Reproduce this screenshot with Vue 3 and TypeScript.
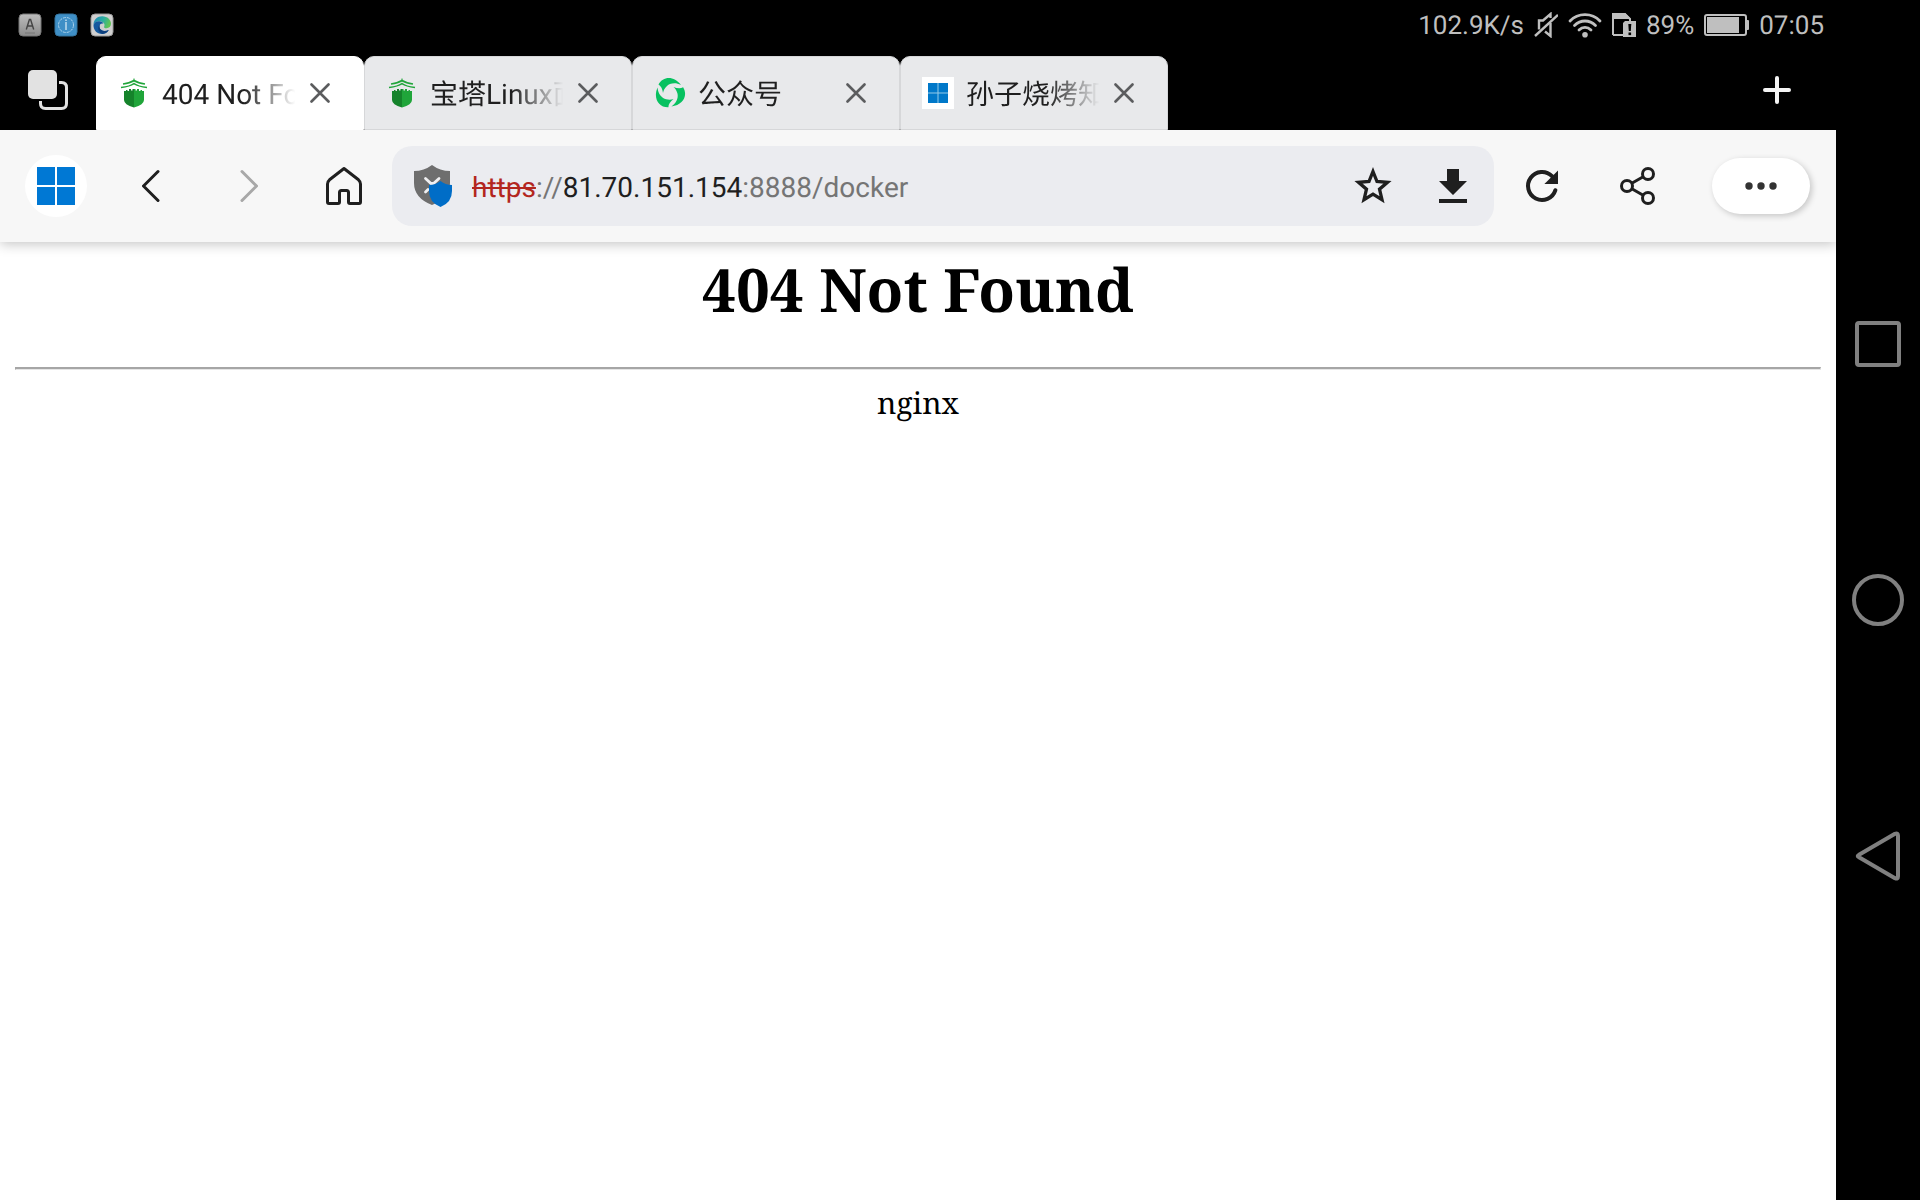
<script setup lang="ts">
import { ref } from 'vue'

type Favicon = 'pagoda' | 'swirl' | 'windows'

interface Tab {
  id: number
  title: string
  icon: Favicon
}

const tabs = ref<Tab[]>([
  { id: 1, title: '404 Not Found', icon: 'pagoda' },
  { id: 2, title: '宝塔Linux面板', icon: 'pagoda' },
  { id: 3, title: '公众号', icon: 'swirl' },
  { id: 4, title: '孙子烧烤知识', icon: 'windows' },
])
const activeId = ref(1)

const address = { scheme: 'https', separator: '://', host: '81.70.151.154', rest: ':8888/docker' }
const fullAddress = address.scheme + address.separator + address.host + address.rest
const editing = ref(false)

function closeTab(id: number): void {
  tabs.value = tabs.value.filter((tab) => tab.id !== id)
}
</script>

<template>
  <div class="device">
    <div class="screen">
      <header class="status">
        <div class="status-group apps">
          <svg width="24" height="24" viewBox="0 0 24 24" aria-hidden="true">
            <defs>
              <linearGradient id="keyGrad" x1="0" y1="0" x2="0" y2="1">
                <stop offset="0" stop-color="#bdbdbd" />
                <stop offset="1" stop-color="#8c8c8c" />
              </linearGradient>
            </defs>
            <rect x="1" y="1" width="22" height="22" rx="4" fill="url(#keyGrad)" stroke="#777" />
            <path d="M8.3 16.5 11.4 6.5h1.2l3.1 10M9.4 13h5.2" fill="none" stroke="#444" stroke-width="1.4" />
            <path d="M7 20h10" stroke="#777" />
          </svg>
          <svg width="24" height="24" viewBox="0 0 24 24" aria-hidden="true">
            <rect x="1" y="1" width="22" height="22" rx="4" fill="#3f8fc6" stroke="#35749f" />
            <circle cx="12" cy="12" r="7.5" fill="none" stroke="#a9d0ea" stroke-dasharray="3 1" />
            <path d="M12 9v8M12 6.5v1.5" stroke="#d5e9f5" stroke-width="1.3" />
          </svg>
          <svg width="24" height="24" viewBox="0 0 24 24" aria-hidden="true">
            <defs>
              <linearGradient id="edgeTop" x1="0" y1="0" x2="1" y2="0.3">
                <stop offset="0" stop-color="#1f86bd" />
                <stop offset="0.6" stop-color="#2cae9e" />
                <stop offset="1" stop-color="#5fc455" />
              </linearGradient>
            </defs>
            <rect x="1" y="1" width="22" height="22" rx="4" fill="#cfcfcf" stroke="#999" />
            <path d="M3.5 12C3.5 6.5 7.5 3.3 12.2 3.3 17.5 3.3 21 7 21 10.8 21 13.6 19 15.2 16.6 15.2 14.6 15.2 13.6 14.4 14.2 13.4 15.6 10.6 12.6 8.2 9.5 8.2 6 8.2 3.8 10 3.5 12Z" fill="url(#edgeTop)" />
            <path d="M3.5 12C4 9.5 6.5 8 9.3 8.2 11.5 8.3 13 9.4 13.5 10.5 10.5 10 9.2 12 9.5 14 10 17.5 14.5 19 18.8 17 17 20 14.5 21 12 21 7 21 3.3 17 3.5 12Z" fill="#14599f" />
            <path d="M9.5 14C9.5 18 14.5 19 18.8 17 17.5 19.3 15 20.7 12.5 20.9 8.5 19.5 7 15.5 9.5 11.5Z" fill="#0d3f7d" />
          </svg>
        </div>

        <div class="status-group system">
          <span>102.9K/s</span>
          <svg width="24" height="26" viewBox="0 0 24 26" fill="none" stroke="#bfbfbf" stroke-width="2.4" aria-hidden="true">
            <path d="M5 17.5V8.5H9L16.5 2V6M16.5 11V24L11 19.5" />
            <path d="M1 24 24 3" />
          </svg>
          <svg width="34" height="26" viewBox="0 0 34 26" fill="none" stroke="#bfbfbf" stroke-width="2.8" stroke-linecap="round" aria-hidden="true">
            <path d="M2 9C10 .5 24 .5 32 9M6.5 13.5C12.5 7.5 21.5 7.5 27.5 13.5M11 18C14.5 14.5 19.5 14.5 23 18" />
            <circle cx="17" cy="22.7" r="2.8" fill="#bfbfbf" stroke="none" />
          </svg>
          <svg width="24" height="24" viewBox="0 0 24 24" aria-hidden="true">
            <path d="M1 22V1H13L18 6V8" fill="none" stroke="#bfbfbf" stroke-width="2" />
            <path d="M0 0H13L19 6H0Z" fill="#bfbfbf" />
            <path d="M1 22H12" stroke="#bfbfbf" stroke-width="2" />
            <path d="M11 10 13 8H24V24H11Z" fill="#bfbfbf" />
            <path d="M16.3 11H19.3L18.8 18H16.8Z" fill="#000" />
            <rect x="16.5" y="19.5" width="2.6" height="2.6" fill="#000" />
          </svg>
          <span>89%</span>
          <svg width="45" height="22" viewBox="0 0 45 22" aria-hidden="true">
            <rect x="1" y="1" width="41" height="20" rx="2" fill="none" stroke="#bfbfbf" stroke-width="2" />
            <rect x="3" y="3" width="32" height="16" fill="#bfbfbf" />
            <path d="M42 6h2q1 0 1 1v8q0 1-1 1h-2z" fill="#bfbfbf" />
          </svg>
          <time>07:05</time>
        </div>
      </header>

      <nav class="strip" aria-label="Tabs">
        <button class="strip-button" type="button" aria-label="Tab overview">
          <svg width="40" height="40" viewBox="0 0 40 40" aria-hidden="true">
            <path d="M31 12.5H33.5Q38.5 12.5 38.5 17.5V33.5Q38.5 38.5 33.5 38.5H17.5Q12.5 38.5 12.5 33.5V31" fill="none" stroke="#e2e2e2" stroke-width="3" />
            <rect width="29" height="29" rx="5" fill="#e2e2e2" />
          </svg>
        </button>

        <div v-for="tab in tabs" :key="tab.id" class="tab" :class="{ active: tab.id === activeId }">
          <button class="tab-main" type="button" @click="activeId = tab.id">
            <svg v-if="tab.icon === 'pagoda'" width="32" height="32" viewBox="0 0 32 32" aria-hidden="true">
              <path d="M15.5 1.5h1V5h-1z" fill="#20a53a" />
              <path d="M5 7Q12 6 16 3.5 20 6 27 7M3 10.5Q12 9.5 16 6.5 20 9.5 29 10.5" fill="none" stroke="#20a53a" stroke-width="1.5" />
              <path d="M6 14H8V13H9.5V14H11V12H13V13.5H14.5V12H16V30.5Q6 27.5 6 23Z" fill="#15832b" />
              <path d="M26 14H24V13H22.5V14H21V12H19V13.5H17.5V12H16V30.5Q26 27.5 26 23Z" fill="#20a53a" />
            </svg>
            <svg v-else-if="tab.icon === 'swirl'" width="32" height="32" viewBox="0 0 32 32" fill="#07c160" aria-hidden="true">
              <g v-for="turn in 3" :key="turn" :transform="`rotate(${turn * 120} 16 16)`">
                <path d="M4.5 7.5C9-1 20-1.500 27 8 21 5 15.500 6.500 12.500 9.500 10.500 11.500 9.500 13.500 9 16 8.500 12 7 9 4.500 7.500Z" />
              </g>
            </svg>
            <svg v-else width="32" height="32" viewBox="0 0 32 32" aria-hidden="true">
              <path d="M0 0h32v32H0z" fill="#fff" />
              <path d="M6 6h20v20H6z" fill="#93cbe8" />
              <path d="M6 6h9.5v9.5H6zM16.5 6H26v9.5h-9.5zM6 16.5h9.5V26H6zM16.5 16.5H26V26h-9.5z" fill="#0078c9" />
            </svg>
            <span class="tab-title">{{ tab.title }}</span>
          </button>
          <button class="tab-close" type="button" :aria-label="`Close ${tab.title}`" @click="closeTab(tab.id)">
            <svg width="20" height="20" viewBox="0 0 20 20" aria-hidden="true">
              <path d="M1.5 1.5l17 17M18.5 1.5l-17 17" stroke="#5b5c5e" stroke-width="2.6" stroke-linecap="round" />
            </svg>
          </button>
        </div>

        <button class="strip-button new-tab" type="button" aria-label="New tab">
          <svg width="28" height="28" viewBox="0 0 28 28" aria-hidden="true">
            <path d="M14 2v24M2 14h24" stroke="#f4f4f4" stroke-width="4" stroke-linecap="round" />
          </svg>
        </button>
      </nav>

      <div class="toolbar">
        <button class="profile" type="button" aria-label="Profile">
          <svg width="38" height="38" viewBox="0 0 38 38" fill="#0078d4" aria-hidden="true">
            <path d="M0 0h18v18H0zM20 0h18v18H20zM0 20h18v18H0zM20 20h18v18H20z" />
          </svg>
        </button>
        <button class="tool" type="button" aria-label="Back">
          <svg width="20" height="34" viewBox="0 0 20 34" aria-hidden="true">
            <path d="M16 2.5 1.5 17 16 31.5" fill="none" stroke="#1f1f1f" stroke-width="3" stroke-linecap="round" stroke-linejoin="round" />
          </svg>
        </button>
        <button class="tool" type="button" aria-label="Forward" disabled>
          <svg width="20" height="34" viewBox="0 0 20 34" aria-hidden="true">
            <path d="M4 2.5 18.5 17 4 31.5" fill="none" stroke="#a8a8a8" stroke-width="3" stroke-linecap="round" stroke-linejoin="round" />
          </svg>
        </button>
        <button class="tool" type="button" aria-label="Home">
          <svg width="36" height="40" viewBox="0 0 36 40" aria-hidden="true">
            <path d="M18 2.5 3.5 13.8Q1.5 15.5 1.5 18V36Q1.5 37.5 3 37.5H12Q13.5 37.5 13.5 36V26.5Q13.5 24.5 15.5 24.5H20.5Q22.5 24.5 22.5 26.5V36Q22.5 37.5 24 37.5H33Q34.5 37.5 34.5 36V18Q34.5 15.5 32.5 13.8Z" fill="none" stroke="#1f1f1f" stroke-width="3" stroke-linejoin="round" />
          </svg>
        </button>

        <div class="address">
          <svg class="shield" width="38" height="42" viewBox="0 0 38 42" aria-hidden="true">
            <path d="M18 0Q26 6 36 6V18Q36 33 18 40 0 33 0 18V6Q10 6 18 0Z" fill="#6e6e6e" />
            <path d="M11.5 13.5 17 18.5H19.5L25 13.5M11.5 27 14 24.5" fill="none" stroke="#f0f0f2" stroke-width="2.8" stroke-linecap="round" />
            <path d="M26.5 16Q31.5 20 38 20V26Q38 37.5 26.5 42 15 37.5 15 26V20Q21.5 20 26.5 16Z" fill="#006dc7" />
          </svg>
          <div class="address-field">
            <div v-show="!editing" class="address-text">
              <span class="scheme">{{ address.scheme }}</span><span>{{ address.separator }}</span><span class="host">{{ address.host }}</span><span>{{ address.rest }}</span>
            </div>
            <input
              class="address-input"
              type="text"
              aria-label="Address"
              :value="editing ? fullAddress : ''"
              @focus="editing = true"
              @blur="editing = false"
            />
          </div>
          <button class="address-action" type="button" aria-label="Add to favourites">
            <svg width="40" height="40" viewBox="0 0 40 40" aria-hidden="true">
              <path d="M20 5.5 24 15.5 34.5 16.3 26.5 23.2 29 33.7 20 28.2 11 33.7 13.5 23.2 5.5 16.3 16 15.5Z" fill="none" stroke="#1f1f1f" stroke-width="3.3" />
            </svg>
          </button>
          <button class="address-action" type="button" aria-label="Download">
            <svg width="28" height="34" viewBox="0 0 28 34" fill="#1f1f1f" aria-hidden="true">
              <path d="M8 0h12v12h8L14 26 0 12h8zM0 30h28v4H0z" />
            </svg>
          </button>
        </div>

        <button class="tool" type="button" aria-label="Reload">
          <svg width="48" height="48" viewBox="0 0 24 24" aria-hidden="true">
            <path d="M17 7.1A7 7 0 1 0 18.7 14.1" fill="none" stroke="#1f1f1f" stroke-width="2" stroke-linecap="round" />
            <path d="M20 4.2V11H13.2Z" fill="#1f1f1f" />
          </svg>
        </button>
        <button class="tool" type="button" aria-label="Share">
          <svg width="36" height="38" viewBox="0 0 36 38" fill="none" stroke="#1f1f1f" stroke-width="3" aria-hidden="true">
            <circle cx="28" cy="7" r="5.5" />
            <circle cx="7" cy="19" r="5.5" />
            <circle cx="28" cy="31" r="5.5" />
            <path d="M11.8 16.3 23.2 9.7M11.8 21.7 23.2 28.3" />
          </svg>
        </button>
        <button class="menu" type="button" aria-label="More">
          <svg width="32" height="8" viewBox="0 0 32 8" fill="#333" aria-hidden="true">
            <circle cx="4" cy="4" r="3.7" />
            <circle cx="16" cy="4" r="3.7" />
            <circle cx="28" cy="4" r="3.7" />
          </svg>
        </button>
      </div>

      <main class="page">
        <h1>404 Not Found</h1>
        <hr />
        <p>nginx</p>
      </main>
    </div>

    <nav class="rail" aria-label="System">
      <button class="rail-button" type="button" aria-label="Recent apps">
        <svg width="52" height="52" viewBox="0 0 52 52" fill="none" stroke="#808080" stroke-width="4" aria-hidden="true">
          <rect x="5" y="5" width="42" height="42" rx="2" />
        </svg>
      </button>
      <button class="rail-button" type="button" aria-label="Home screen">
        <svg width="52" height="52" viewBox="0 0 52 52" fill="none" stroke="#808080" stroke-width="4" aria-hidden="true">
          <circle cx="26" cy="26" r="24" />
        </svg>
      </button>
      <button class="rail-button" type="button" aria-label="Go back">
        <svg width="52" height="52" viewBox="0 0 52 52" fill="none" stroke="#808080" stroke-width="4" stroke-linejoin="round" aria-hidden="true">
          <path d="M7 24.7 43 3.800Q46 2.500 46 5.800V46.200Q46 49.500 43 48.200L7 27.300Q4.500 26 7 24.700Z" />
        </svg>
      </button>
    </nav>
  </div>
</template>

<style>
body {
  background: #000;
}
</style>

<style scoped>
.device {
  display: flex;
  min-height: 100vh;
  background: #000;
  font-family: Roboto, "Noto Sans CJK SC", sans-serif;
  text-rendering: geometricPrecision;
}

button {
  display: flex;
  align-items: center;
  justify-content: center;
  flex: none;
  padding: 0;
  border: 0;
  background: none;
  color: inherit;
  font: inherit;
  text-rendering: inherit;
}

svg {
  display: block;
  flex: none;
}

.screen {
  display: flex;
  flex: 1;
  flex-direction: column;
  min-width: 0;
}

.status {
  display: flex;
  align-items: center;
  justify-content: space-between;
  height: 50px;
  padding: 0 12px 0 18px;
  color: #bfbfbf;
  font-size: 26px;
  line-height: 32px;
}

.status-group {
  display: flex;
  align-items: center;
  gap: 10px;
}

.apps {
  gap: 12px;
}

.system span,
.system time {
  padding-top: 2px;
}

.strip {
  display: flex;
  align-items: flex-end;
  height: 80px;
}

.strip-button {
  width: 96px;
  height: 80px;
}

.new-tab {
  margin: 0 11px 0 auto;
}

.tab {
  box-sizing: border-box;
  display: flex;
  flex: 0 1 268px;
  align-items: center;
  min-width: 0;
  height: 74px;
  padding: 0 21px;
  border: 1px solid #d6d7d9;
  border-radius: 10px 10px 0 0;
  background: #e8e9eb;
  color: #1f1f1f;
}

.tab.active {
  border-color: #fff;
  background: #fff;
}

.tab-main {
  flex: 1;
  justify-content: flex-start;
  gap: 12px;
  min-width: 0;
  height: 72px;
}

.tab-title {
  flex: 1;
  overflow: hidden;
  padding-top: 4px;
  font-size: 28px;
  line-height: 40px;
  text-align: left;
  white-space: nowrap;
  mask-image: linear-gradient(to right, #000 60%, transparent 98%);
}

.tab-close {
  width: 44px;
  height: 48px;
}

.toolbar {
  z-index: 1;
  display: flex;
  align-items: center;
  height: 112px;
  padding: 0 26px 0 25px;
  background: #f7f7f7;
  box-shadow: 0 2px 12px rgba(0, 0, 0, 0.24);
  clip-path: inset(0 0 -16px 0);
}

.profile {
  width: 62px;
  height: 62px;
  margin-right: 17px;
  border-radius: 50%;
  background: #fff;
}

.tool {
  width: 96px;
  height: 80px;
}

.address {
  box-sizing: border-box;
  display: flex;
  flex: 1;
  align-items: center;
  min-width: 0;
  height: 80px;
  padding-right: 1px;
  border-radius: 20px;
  background: #ebecf0;
}

.shield {
  margin: 0 20px 0 22px;
}

.address-field {
  display: grid;
  flex: 1;
  align-items: center;
  min-width: 0;
  padding-top: 4px;
  color: #757575;
  font-size: 28px;
  line-height: 40px;
}

.address-text,
.address-input {
  grid-area: 1 / 1;
  min-width: 0;
}

.address-text {
  overflow: hidden;
  white-space: nowrap;
}

.address-input {
  padding: 0;
  border: 0;
  outline: 0;
  background: none;
  color: #1f1f1f;
  font: inherit;
}

.scheme {
  color: #b3261e;
  text-decoration: line-through;
}

.host {
  color: #1f1f1f;
}

.address-action {
  width: 80px;
  height: 80px;
}

.menu {
  width: 98px;
  height: 56px;
  margin-left: 26px;
  border-radius: 28px;
  background: #fff;
  box-shadow: 2px 2px 6px rgba(0, 0, 0, 0.2);
}

.page {
  flex: 1;
  padding: 13px 15px;
  background: #fff;
  color: #000;
  font-family: "Noto Serif", "Droid Serif", "DejaVu Serif", serif;
  text-align: center;
}

h1 {
  margin: 0;
  font-size: 60px;
  font-weight: 700;
  line-height: 68px;
}

hr {
  height: 0;
  margin: 44px 0 13px;
  border: solid;
  border-width: 2px 1px 1px;
  border-color: #a6a6a6 #e6e6e6 #e6e6e6 #a6a6a6;
}

p {
  margin: 0;
  font-size: 30px;
  line-height: 40px;
}

.rail {
  display: flex;
  flex: none;
  flex-direction: column;
  align-items: center;
  justify-content: center;
  gap: 204px;
  width: 84px;
}

.rail-button {
  width: 52px;
  height: 52px;
}
</style>
